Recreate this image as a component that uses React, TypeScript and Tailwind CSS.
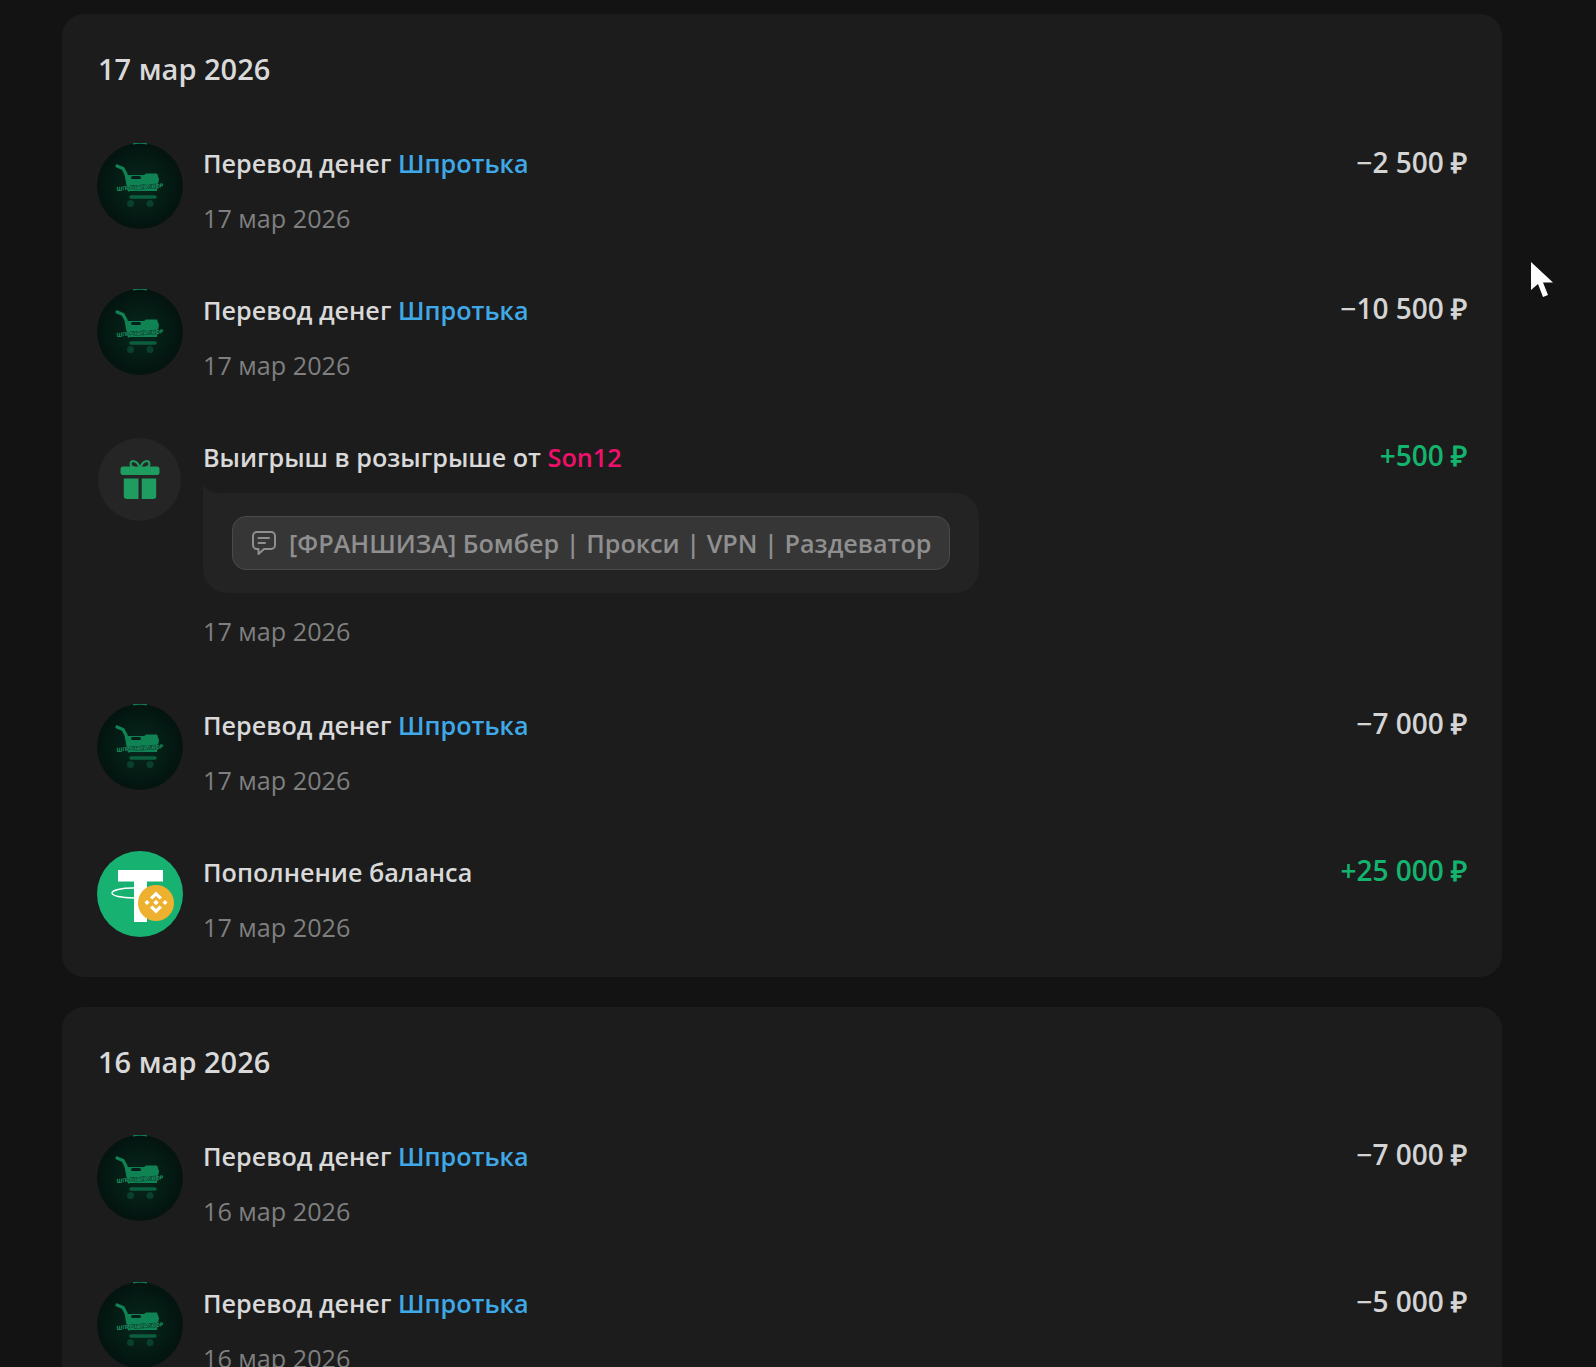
import { Fragment } from 'react';

type Row = {
  kind: 'shop' | 'gift' | 'usdt';
  title: string;
  link?: string;
  linkColor?: string;
  amount: string;
  positive?: boolean;
  date: string;
  note?: string;
};

const groups: { date: string; rows: Row[] }[] = [
  {
    date: '17 мар 2026',
    rows: [
      { kind: 'shop', title: 'Перевод денег', link: 'Шпротька', linkColor: 'text-[#3fa9e8]', amount: '−2 500 ₽', date: '17 мар 2026' },
      { kind: 'shop', title: 'Перевод денег', link: 'Шпротька', linkColor: 'text-[#3fa9e8]', amount: '−10 500 ₽', date: '17 мар 2026' },
      {
        kind: 'gift',
        title: 'Выигрыш в розыгрыше от',
        link: 'Son12',
        linkColor: 'text-[#f0106a]',
        amount: '+500 ₽',
        positive: true,
        date: '17 мар 2026',
        note: '[ФРАНШИЗА] Бомбер | Прокси | VPN | Раздеватор',
      },
      { kind: 'shop', title: 'Перевод денег', link: 'Шпротька', linkColor: 'text-[#3fa9e8]', amount: '−7 000 ₽', date: '17 мар 2026' },
      { kind: 'usdt', title: 'Пополнение баланса', amount: '+25 000 ₽', positive: true, date: '17 мар 2026' },
    ],
  },
  {
    date: '16 мар 2026',
    rows: [
      { kind: 'shop', title: 'Перевод денег', link: 'Шпротька', linkColor: 'text-[#3fa9e8]', amount: '−7 000 ₽', date: '16 мар 2026' },
      { kind: 'shop', title: 'Перевод денег', link: 'Шпротька', linkColor: 'text-[#3fa9e8]', amount: '−5 000 ₽', date: '16 мар 2026' },
    ],
  },
];

function ShopAvatar() {
  return (
    <svg viewBox="0 0 86 86" className="w-[86px] h-[86px] shrink-0 mt-[1.5px]">
      <defs>
        <radialGradient id="shopBg" cx="50%" cy="50%" r="50%">
          <stop offset="0%" stopColor="#07281d" />
          <stop offset="65%" stopColor="#041b14" />
          <stop offset="100%" stopColor="#04130f" />
        </radialGradient>
      </defs>
      <circle cx="43" cy="43" r="43" fill="url(#shopBg)" />
      <path d="M36 0.8 A43 43 0 0 1 50 0.8" stroke="#0e7f52" strokeWidth="1.2" fill="none" />
      <path d="M20 23 L26 25.5 L29 31 L32 47" stroke="#0f8354" strokeWidth="3.2" fill="none" strokeLinecap="round" />
      <path d="M29 32 H47 L49 30.5 H60 L62 36 L60 48 H32 Z" fill="#0f8354" />
      <rect x="34" y="33" width="10" height="3" rx="1.5" fill="#04201a" />
      <path d="M34 54 H58" stroke="#0b5f3e" strokeWidth="3.5" strokeLinecap="round" />
      <circle cx="33.5" cy="60.5" r="3.5" fill="#0a3f2c" />
      <circle cx="53" cy="60.5" r="3.5" fill="#0a3f2c" />
      <text
        x="43"
        y="46"
        textAnchor="middle"
        fontSize="5.4"
        fontWeight="600"
        fill="#22b077"
        stroke="#06261b"
        strokeWidth="0.8"
        paintOrder="stroke"
        transform="rotate(-4 43 46)"
        fontFamily="'Open Sans', sans-serif"
      >
        ШПРОТЬКА SHOP
      </text>
    </svg>
  );
}

function GiftAvatar() {
  return (
    <div className="w-[86px] h-[86px] shrink-0 flex items-center justify-center pr-[1px] mt-[1.5px]">
      <div className="w-[83px] h-[83px] rounded-full bg-[#252525] flex items-center justify-center">
        <svg viewBox="0 0 40 40" className="w-10 h-10">
          <path d="M19.5 8 C17 1 10.5 0.5 10.5 5 C10.5 7 12 8 14 8 M20.5 8 C23 1 29.5 0.5 29.5 5 C29.5 7 28 8 26 8" stroke="#1f9c5f" strokeWidth="2" fill="none" />
          <rect x="0.5" y="7.5" width="39" height="8.5" rx="2.5" fill="#1f9c5f" />
          <path d="M3.8 19.5 H18.5 V40 H6.8 A3 3 0 0 1 3.8 37 Z" fill="#1f9c5f" />
          <path d="M21.7 19.5 H36.2 V37 A3 3 0 0 1 33.2 40 H21.7 Z" fill="#1f9c5f" />
        </svg>
      </div>
    </div>
  );
}

function UsdtAvatar() {
  return (
    <svg viewBox="0 0 86 86" className="w-[86px] h-[86px] shrink-0 mt-[1px]">
      <circle cx="43" cy="43" r="43" fill="#17b172" />
      <path d="M21 19 H66 V30.5 H50 V71 H37 V30.5 H21 Z" fill="#ffffff" />
      <ellipse cx="36" cy="42" rx="21" ry="5" fill="none" stroke="#ffffff" strokeWidth="1.4" />
      <circle cx="59" cy="52" r="18" fill="#eeb02f" />
      <g fill="#ffffff">
        <path d="M59 40.5 L65 46.5 L62.6 48.6 L59 45 L55.4 48.6 L53 46.5 Z" />
        <path d="M59 62.5 L65 56.5 L62.6 54.4 L59 58 L55.4 54.4 L53 56.5 Z" />
        <path d="M47.5 51.5 L50 49 L52.5 51.5 L50 54 Z" />
        <path d="M65.5 51.5 L68 49 L70.5 51.5 L68 54 Z" />
        <path d="M59 48.8 L61.7 51.5 L59 54.2 L56.3 51.5 Z" />
      </g>
    </svg>
  );
}

function Note({ text }: { text: string }) {
  return (
    <div className="relative mt-[20px] self-start rounded-[24px] rounded-tl-none bg-[#232323] px-[29px] py-[23px]">
      <svg viewBox="0 0 20 10" className="absolute left-0 top-[-8px] w-5 h-[10px]">
        <path d="M0 0 C4 5 10 8 20 9 V10 H0 Z" fill="#232323" />
      </svg>
      <div className="flex items-center h-[54px] rounded-[14px] border border-[#4a4a4a] bg-[#363636] pl-[18px] pr-[17px]">
        <svg viewBox="0 0 26 26" className="w-[26px] h-[26px] mr-[12px]" fill="none" stroke="#8f8f8f" strokeWidth="2" strokeLinecap="round" strokeLinejoin="round">
          <path d="M6 2 H20 A4 4 0 0 1 24 6 V15 A4 4 0 0 1 20 19 H13 L7.5 24 V19 H6 A4 4 0 0 1 2 15 V6 A4 4 0 0 1 6 2 Z" />
          <path d="M7.5 8 H18" />
          <path d="M7.5 13 H14" />
        </svg>
        <span className="text-[25.2px] leading-[34px] font-semibold text-[#8f8f8f] whitespace-nowrap">{text}</span>
      </div>
    </div>
  );
}

function TransactionRow({ row }: { row: Row }) {
  return (
    <div className="flex items-start gap-[18px]">
      {row.kind === 'shop' && <ShopAvatar />}
      {row.kind === 'gift' && <GiftAvatar />}
      {row.kind === 'usdt' && <UsdtAvatar />}
      <div className="flex-1 min-w-0 flex flex-col pl-[2px]">
        <div className="flex items-start justify-between pt-[6px]">
          <div className="text-[25.2px] leading-[32px] font-semibold text-[#d9d9d9]">
            {row.title}
            {row.link && (
              <Fragment>
                {' '}
                <span className={row.linkColor}>{row.link}</span>
              </Fragment>
            )}
          </div>
          <div className={`-mt-[1.5px] text-[28px] leading-[32px] font-semibold whitespace-nowrap ${row.positive ? 'text-[#14b46e]' : 'text-[#d4d4d4]'}`}>
            {row.amount}
          </div>
        </div>
        {row.note && <Note text={row.note} />}
        <div className={`text-[25.2px] leading-[32px] text-[#7f7f7f] ${row.note ? 'mt-[22px] mb-[2px]' : 'mt-[23.2px]'}`}>{row.date}</div>
      </div>
    </div>
  );
}

export default function App() {
  return (
    <div className="relative h-[1367px] overflow-hidden bg-[#131313] pt-[14px] font-['Open_Sans',sans-serif]">
      <div className="ml-[62px] w-[1440px] flex flex-col gap-[30px]">
        {groups.map((group) => (
          <section key={group.date} className="rounded-[22px] bg-[#1c1c1c] px-[35px] pt-[36px] pb-[34px]">
            <h2 className="text-[29px] leading-[38px] font-semibold text-[#d9d9d9] ml-[1px]">{group.date}</h2>
            <div className="mt-[53px] flex flex-col gap-[53.8px]">
              {group.rows.map((row, i) => (
                <TransactionRow key={i} row={row} />
              ))}
            </div>
          </section>
        ))}
      </div>
      <svg viewBox="0 0 24 38" className="absolute left-[1530px] top-[261px] w-6 h-[38px]">
        <path d="M1 1 V29 L8 23 L13 36 L18 34 L13 21.5 H23 Z" fill="#ffffff" />
      </svg>
    </div>
  );
}
